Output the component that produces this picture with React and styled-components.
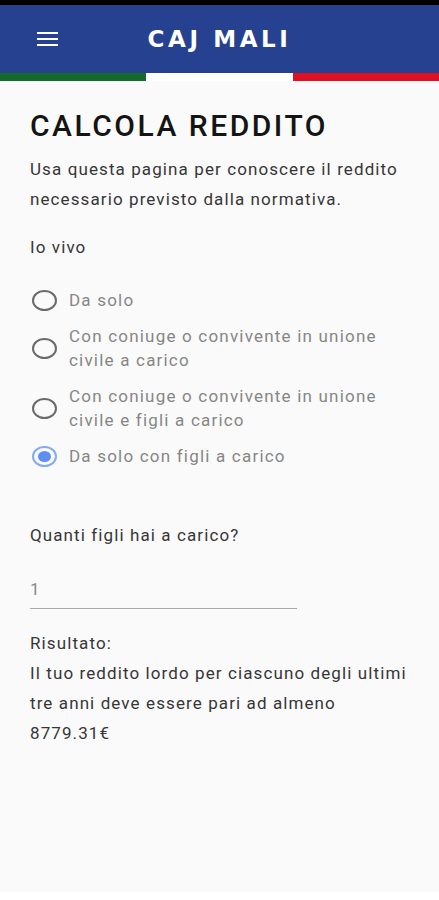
import React, { useState } from "react";
import styled, { createGlobalStyle } from "styled-components";

const Global = createGlobalStyle`
  html, body { margin: 0; padding: 0; background: #ffffff; }
  body { font-family: Roboto, "Noto Sans", "Liberation Sans", sans-serif; }
  * { box-sizing: border-box; }
`;

const Screen = styled.div`
  width: 439px;
  height: 892px;
  background: #fafafa;
  display: flex;
  flex-direction: column;
`;

const StatusBar = styled.div`
  height: 5px;
  background: #000;
`;

const AppBar = styled.header`
  height: 68px;
  background: #26418f;
  display: grid;
  grid-template-columns: 80px 1fr 80px;
  align-items: center;
`;

const MenuButton = styled.button`
  width: 40px;
  height: 40px;
  margin-left: 27px;
  border: 0;
  background: transparent;
  padding: 0;
  display: flex;
  flex-direction: column;
  justify-content: center;
  align-items: center;
  gap: 3.5px;
  cursor: pointer;
`;

const MenuLine = styled.span`
  display: block;
  width: 21px;
  height: 2.5px;
  background: #ffffff;
`;

const Title = styled.h1`
  margin: 0;
  text-align: center;
  color: #ffffff;
  font-family: "DejaVu Sans", Verdana, sans-serif;
  font-weight: 700;
  font-size: 23px;
  letter-spacing: 3.6px;
`;

const Flag = styled.div`
  display: grid;
  grid-template-columns: 146px 147px 1fr;
  height: 8px;
`;

const FlagStripe = styled.div`
  background: ${(p) => p.$color};
`;

const Content = styled.main`
  padding: 27px 30px 0 30px;
  display: flex;
  flex-direction: column;
`;

const Heading = styled.h2`
  margin: 0;
  font-size: 30px;
  line-height: 36px;
  font-weight: 500;
  letter-spacing: 2.5px;
  color: #141414;
`;

const Text = styled.p`
  margin: ${(p) => p.$mt || 0}px 0 0 0;
  font-size: 17px;
  line-height: 30px;
  letter-spacing: 1.1px;
  color: #363636;
`;

const Options = styled.div`
  margin-top: 26px;
  display: flex;
  flex-direction: column;
  gap: 12px;
`;

const Option = styled.label`
  display: flex;
  align-items: center;
  gap: 12px;
  cursor: pointer;
`;

const Circle = styled.span`
  flex: 0 0 auto;
  width: 25px;
  height: 21px;
  margin-left: 2px;
  border-radius: 50%;
  border: 2px solid ${(p) => (p.$checked ? "#85aaf0" : "#6a6a6a")};
  display: flex;
  align-items: center;
  justify-content: center;
  &::after {
    content: "";
    width: 13px;
    height: 11px;
    border-radius: 50%;
    background: ${(p) => (p.$checked ? "#5e8ff0" : "transparent")};
  }
`;

const OptionLabel = styled.span`
  font-size: 17px;
  line-height: 24px;
  letter-spacing: 1.2px;
  color: #868686;
`;

const Field = styled.div`
  margin-top: 24px;
  width: 267px;
  border-bottom: 1px solid #a8a8a8;
  padding-bottom: 4px;
  font-size: 17px;
  line-height: 30px;
  color: #8a8a8a;
`;

const options = [
  "Da solo",
  "Con coniuge o convivente in unione civile a carico",
  "Con coniuge o convivente in unione civile e figli a carico",
  "Da solo con figli a carico",
];

export default function App() {
  const [sel, setSel] = useState(3);
  return (
    <Screen>
      <Global />
      <StatusBar />
      <AppBar>
        <MenuButton aria-label="menu">
          <MenuLine />
          <MenuLine />
          <MenuLine />
        </MenuButton>
        <Title>CAJ MALI</Title>
        <span />
      </AppBar>
      <Flag>
        <FlagStripe $color="#15692b" />
        <FlagStripe $color="#ffffff" />
        <FlagStripe $color="#de1023" />
      </Flag>
      <Content>
        <Heading>CALCOLA REDDITO</Heading>
        <Text $mt={10}>
          Usa questa pagina per conoscere il reddito necessario previsto dalla
          normativa.
        </Text>
        <Text $mt={18}>Io vivo</Text>
        <Options>
          {options.map((o, i) => (
            <Option key={i} onClick={() => setSel(i)}>
              <Circle $checked={sel === i} />
              <OptionLabel>{o}</OptionLabel>
            </Option>
          ))}
        </Options>
        <Text $mt={52}>Quanti figli hai a carico?</Text>
        <Field>1</Field>
        <Text $mt={19}>
          Risultato:
          <br />
          Il tuo reddito lordo per ciascuno degli ultimi tre anni deve essere
          pari ad almeno 8779.31€
        </Text>
      </Content>
    </Screen>
  );
}
